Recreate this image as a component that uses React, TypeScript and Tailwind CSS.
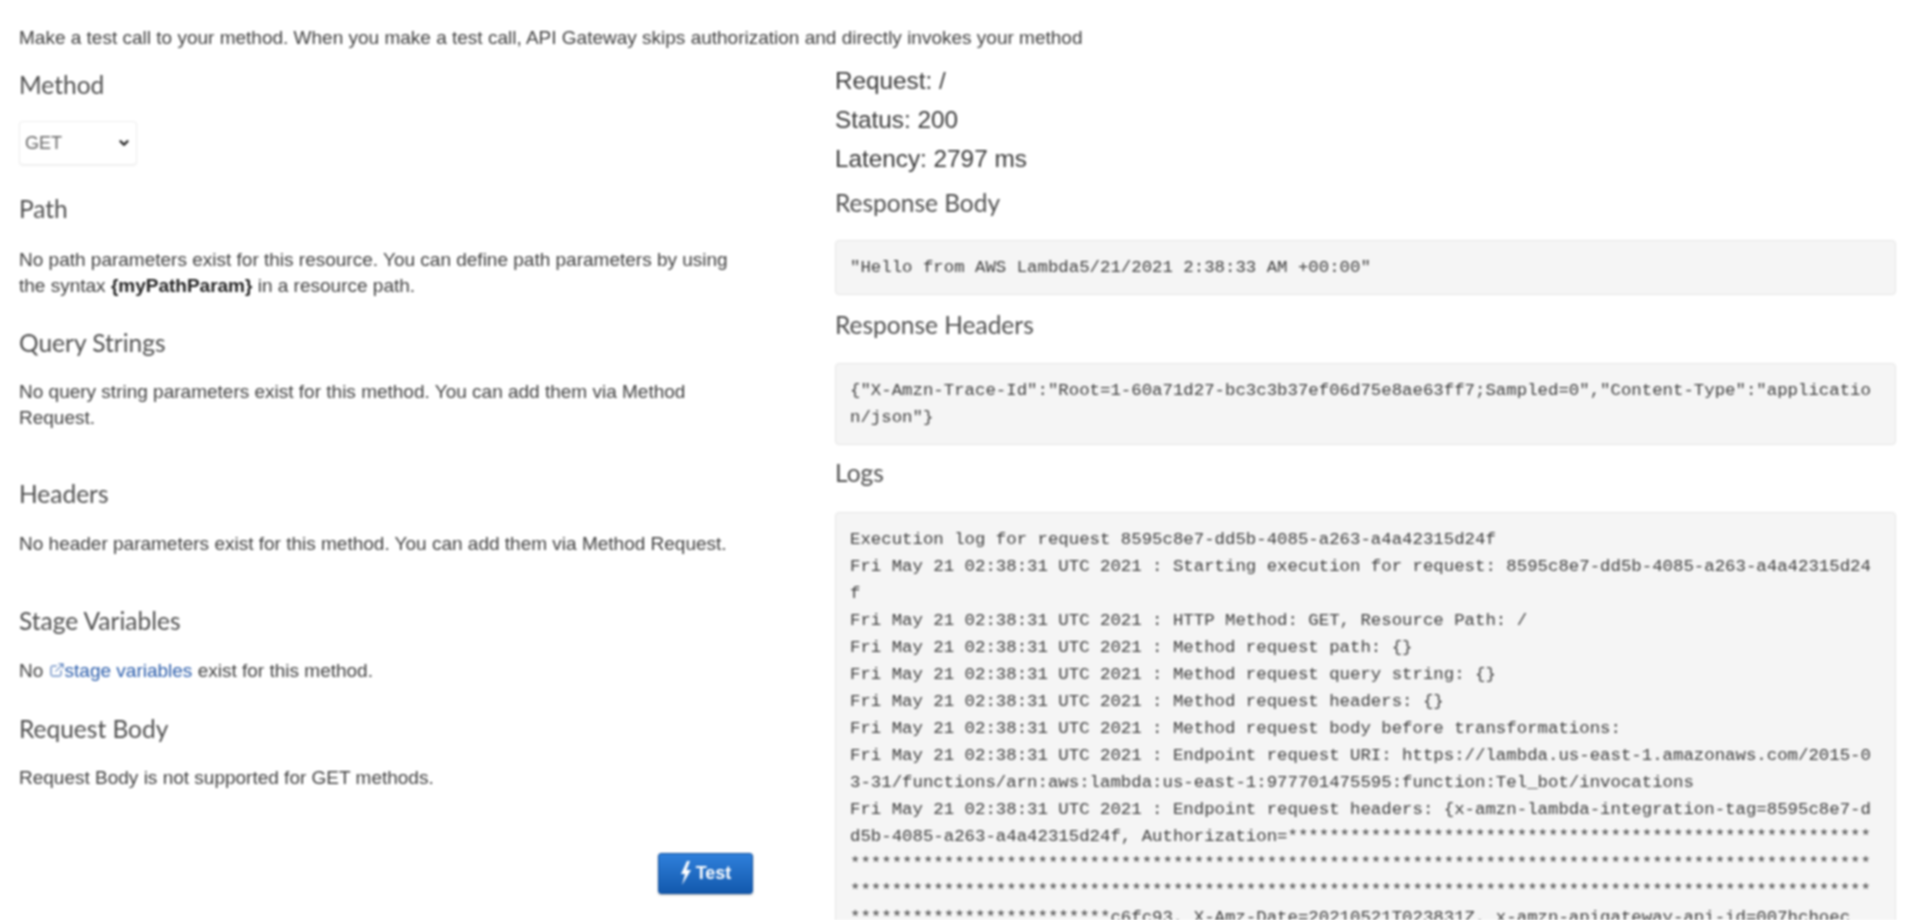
import { ChevronDown, ExternalLink } from "lucide-react";

const stars = (n: number) => "*".repeat(n);
const logs = [
  "Execution log for request 8595c8e7-dd5b-4085-a263-a4a42315d24f",
  "Fri May 21 02:38:31 UTC 2021 : Starting execution for request: 8595c8e7-dd5b-4085-a263-a4a42315d24f",
  "Fri May 21 02:38:31 UTC 2021 : HTTP Method: GET, Resource Path: /",
  "Fri May 21 02:38:31 UTC 2021 : Method request path: {}",
  "Fri May 21 02:38:31 UTC 2021 : Method request query string: {}",
  "Fri May 21 02:38:31 UTC 2021 : Method request headers: {}",
  "Fri May 21 02:38:31 UTC 2021 : Method request body before transformations:",
  "Fri May 21 02:38:31 UTC 2021 : Endpoint request URI: https://lambda.us-east-1.amazonaws.com/2015-03-31/functions/arn:aws:lambda:us-east-1:977701475595:function:Tel_bot/invocations",
  "Fri May 21 02:38:31 UTC 2021 : Endpoint request headers: {x-amzn-lambda-integration-tag=8595c8e7-dd5b-4085-a263-a4a42315d24f, Authorization=" +
    stars(56 + 98 + 98 + 25) +
    "c6fc93, X-Amz-Date=20210521T023831Z, x-amzn-apigateway-api-id=007hchoec",
];

function Heading({ children, className }: { children: string; className: string }) {
  return (
    <h3 className={"font-['Lato',sans-serif] text-[24.5px] leading-[28px] font-normal text-[#4f4f4f] " + className}>
      {children}
    </h3>
  );
}

function Para({ children, className }: { children: React.ReactNode; className: string }) {
  return <p className={"text-[19px] leading-[25.7px] text-[#3f3f3f] " + className}>{children}</p>;
}

function Pre({ children, className }: { children: React.ReactNode; className: string }) {
  return (
    <pre
      className={
        "rounded-[4px] border border-[#e6e6e6] bg-[#f5f5f5] px-[14px] py-[13px] font-['Liberation_Mono',monospace] text-[17.37px] leading-[27px] text-[#3d3d3d] whitespace-pre-wrap break-all " +
        className
      }
    >
      {children}
    </pre>
  );
}

export default function App() {
  return (
    <div className="h-[920px] overflow-hidden bg-white font-['Liberation_Sans',sans-serif] blur-[0.8px]">
      <p className="pl-[19px] pt-[26px] text-[19px] leading-[23px] text-[#3f3f3f]">
        Make a test call to your method. When you make a test call, API Gateway skips authorization and directly invokes your method
      </p>
      <div className="flex">
        <div className="ml-[19px] flex w-[734px] flex-col">
          <Heading className="mt-[22px]">Method</Heading>
          <div className="relative mt-[22px] w-[118px]">
            <select className="h-[44px] w-full appearance-none rounded-[4px] border border-[#eeeeee] bg-white pl-[5px] text-[18px] text-[#666] shadow-[0_1px_2px_rgba(0,0,0,0.06)]">
              <option>GET</option>
            </select>
            <ChevronDown
              className="pointer-events-none absolute left-[98px] top-[15px] h-[14px] w-[14px] text-[#222]"
              strokeWidth={4}
            />
          </div>
          <Heading className="mt-[30px]">Path</Heading>
          <Para className="mt-[24px]">
            No path parameters exist for this resource. You can define path parameters by using the syntax{" "}
            <b className="font-bold text-[#222]">{"{myPathParam}"}</b> in a resource path.
          </Para>
          <Heading className="mt-[31px]">Query Strings</Heading>
          <Para className="mt-[22px]">
            No query string parameters exist for this method. You can add them via Method Request.
          </Para>
          <Heading className="mt-[49px]">Headers</Heading>
          <Para className="mt-[23px]">No header parameters exist for this method. You can add them via Method Request.</Para>
          <Heading className="mt-[50px]">Stage Variables</Heading>
          <Para className="mt-[23px]">
            No{" "}
            <a className="text-[#2a5caa]">
              <ExternalLink className="inline-block h-[16px] w-[16px] align-[-1px]" strokeWidth={1.5} />
              stage variables
            </a>{" "}
            exist for this method.
          </Para>
          <Heading className="mt-[32px]">Request Body</Heading>
          <Para className="mt-[22px]">Request Body is not supported for GET methods.</Para>
          <div className="mt-[62px] flex justify-end">
            <button className="flex h-[41px] w-[95px] items-center justify-center gap-[4px] rounded-[3px] border border-[#0f4f9e] bg-gradient-to-b from-[#2f80db] to-[#1259ad] text-[18px] font-bold text-white shadow-[0_1px_2px_rgba(0,0,0,0.3)]">
              <svg viewBox="0 0 12 24" className="h-[24px] w-[12px]" fill="white">
                <path d="M7 0 L1 13 H5 L2 24 L11 9 H6.5 L10 0 Z" />
              </svg>
              Test
            </button>
          </div>
        </div>
        <div className="ml-[82px] flex w-[1061px] flex-col">
          <div className="mt-[12px] text-[24.3px] leading-[39px] text-[#3a3a3a]">
            <div>Request: /</div>
            <div>Status: 200</div>
            <div>Latency: 2797 ms</div>
          </div>
          <Heading className="mt-[11px]">Response Body</Heading>
          <Pre className="mt-[23px]">{'"Hello from AWS Lambda5/21/2021 2:38:33 AM +00:00"'}</Pre>
          <Heading className="mt-[16px]">Response Headers</Heading>
          <Pre className="mt-[24px]">
            {'{"X-Amzn-Trace-Id":"Root=1-60a71d27-bc3c3b37ef06d75e8ae63ff7;Sampled=0","Content-Type":"application/json"}'}
          </Pre>
          <Heading className="mt-[14px]">Logs</Heading>
          <Pre className="mt-[25px]">{logs.join("\n")}</Pre>
        </div>
      </div>
    </div>
  );
}
